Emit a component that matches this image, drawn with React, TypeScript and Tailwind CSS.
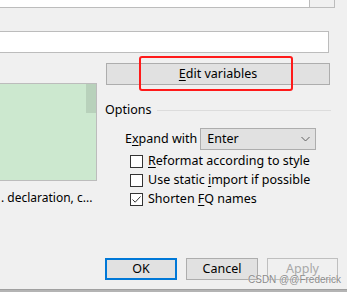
import React from "react";

const U = ({ children }: { children: React.ReactNode }) => (
  <span className="underline underline-offset-[2px] decoration-[1px]">{children}</span>
);

function Check({ checked, children }: { checked?: boolean; children: React.ReactNode }) {
  return (
    <div className="flex items-center h-[19px]">
      <div className="w-[13px] h-[13px] border border-[#333333] bg-white flex items-center justify-center shrink-0">
        {checked && (
          <svg width="11" height="11" viewBox="0 0 11 11">
            <path d="M1.5 5.5 L4.2 8.2 L9.5 2.5" fill="none" stroke="#333" strokeWidth="1" />
          </svg>
        )}
      </div>
      <span className="ml-[5px] leading-none whitespace-nowrap">{children}</span>
    </div>
  );
}

export default function App() {
  return (
    <div
      className="w-[347px] h-[292px] bg-[#f0f0f0] relative overflow-hidden flex flex-col text-[12.5px] text-black"
      style={{ fontFamily: '"Noto Sans", "Open Sans", sans-serif' }}
    >
      <div className="flex h-[8px] shrink-0">
        <div className="w-[310px] h-[8px] bg-white border-r border-b border-[#bcbcbc]" />
        <div className="w-[25px] h-[8px] border-r border-b border-[#bcbcbc]" />
      </div>
      <div className="mt-[23px] w-[329px] h-[22px] shrink-0 bg-white border-y border-r border-[#bcbcbc]" />
      <div className="flex mt-[10px] shrink-0">
        <div className="w-[97px] pt-[20px]">
          <div className="h-[98px] bg-[#cce8cf] border-y border-r border-[#bcbcbc] flex justify-end">
            <div className="w-[10px] h-[29px] bg-[#b8d1bb]" />
          </div>
          <div className="mt-[10px] h-[14px] leading-[14px] whitespace-nowrap pl-[1px] text-[12px]">. declaration, c...</div>
        </div>
        <div className="ml-[9px] w-[225px]">
          <div className="h-[22px] w-[224px] bg-[#e1e1e1] border border-[#adadad] flex items-center justify-center">
            <span>
              <U>E</U>dit variables
            </span>
          </div>
          <div className="mt-[18px] h-[14px] flex items-center -ml-[1px]">
            <span className="leading-none">Options</span>
            <div className="flex-1 ml-[6px] h-px bg-[#dcdcdc]" />
          </div>
          <div className="mt-[11px] flex items-center h-[22px] pl-[19px]">
            <span className="leading-none whitespace-nowrap">
              E<U>x</U>pand with
            </span>
            <div className="ml-[3px] w-[116px] h-[22px] shrink-0 bg-[#e1e1e1] border border-[#adadad] flex items-center justify-between pl-[6px] pr-[5px]">
              <span className="leading-none">Enter</span>
              <svg width="9" height="6" viewBox="0 0 9 6">
                <path d="M0.5 1 L4.5 5 L8.5 1" fill="none" stroke="#606060" strokeWidth="1" />
              </svg>
            </div>
          </div>
          <div className="mt-[2px] pl-[24px]">
            <Check>
              <U>R</U>eformat according to style
            </Check>
            <Check>
              Use static <U>i</U>mport if possible
            </Check>
            <Check checked>
              Shorten <U>F</U>Q names
            </Check>
          </div>
        </div>
      </div>
      <div className="flex-1" />
      <div className="flex justify-end pr-[9px] gap-[9px] shrink-0">
        <div className="w-[72px] h-[22px] bg-[#e1e1e1] border-2 border-[#0078d7] flex items-center justify-center">
          OK
        </div>
        <div className="w-[72px] h-[22px] bg-[#e1e1e1] border border-[#adadad] flex items-center justify-center">
          Cancel
        </div>
        <div className="w-[71px] h-[22px] bg-[#f0f0f0] border border-[#bfbfbf] flex items-start justify-center pt-[1px] text-[#a8a8a8]">
          Apply
        </div>
      </div>
      <div className="h-[9px] shrink-0" />
      <div className="h-px bg-[#a0a0a0] shrink-0" />
      <div className="h-[2px] bg-[#b4b4b4] shrink-0" />

      <div className="absolute left-[139px] top-[56px] w-[154px] h-[35px] border-2 border-[#ff1a1a] rounded-[3px]" />
      <div
        className="absolute left-[248px] top-[274px] text-[10px] leading-[12px] text-[#8a8a8a] whitespace-nowrap"
        style={{ fontFamily: '"Liberation Sans", sans-serif', textShadow: "0 0 1px #fff" }}
      >
        CSDN @@Frederick
      </div>
    </div>
  );
}
